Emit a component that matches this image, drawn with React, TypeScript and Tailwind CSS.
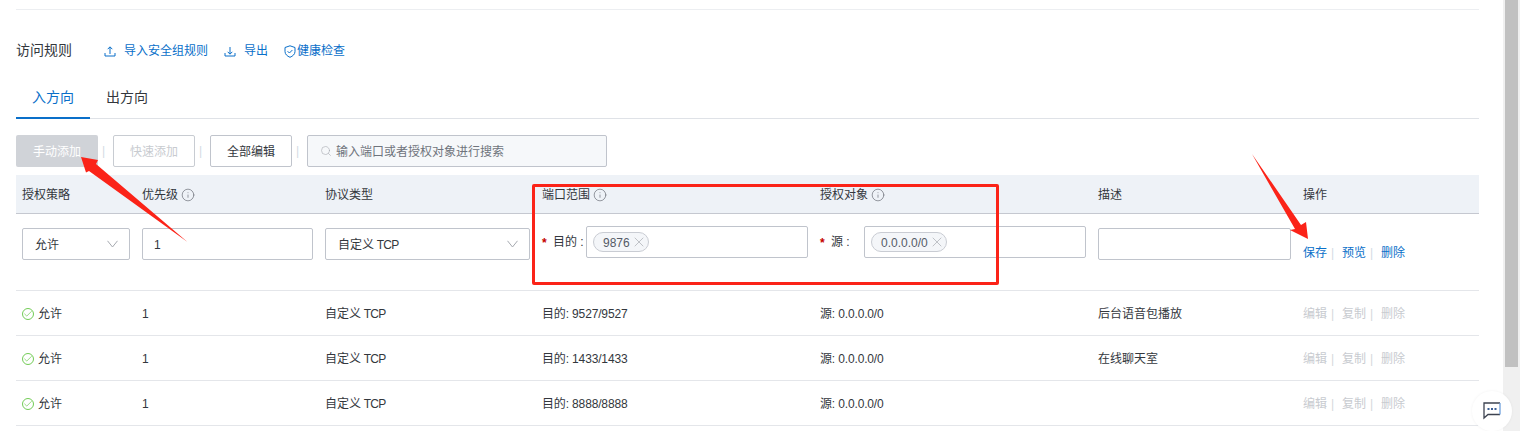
import { Check, Info, Search, X } from "lucide-react";

const GRID = "grid grid-cols-[126px_183px_217px_278px_278px_205px_176px]";

function Tray({ up }: { up: boolean }) {
  return (
    <svg width="12" height="12" viewBox="0 0 12 12" fill="none" stroke="#0a6fc9" strokeWidth="1">
      <path d="M1 8v3h10V8" />
      <path d="M6 9V2" />
      {up ? <path d="M3.7 4.2 6 1.8l2.3 2.4" /> : <path d="M3.7 6.8 6 9.2l2.3-2.4" />}
    </svg>
  );
}

function Shield() {
  return (
    <svg width="12" height="13" viewBox="0 0 12 13" fill="none" stroke="#0a6fc9" strokeWidth="1">
      <path d="M6 .8 11 2.5v4c0 2.8-2.2 4.6-5 5.8-2.8-1.2-5-3-5-5.8v-4z" />
      <path d="m3.6 6.2 1.8 1.8 3-3" />
    </svg>
  );
}

function Chevron() {
  return (
    <svg width="11" height="8" viewBox="0 0 11 8" fill="none" stroke="#a6aab0" strokeWidth="1">
      <path d="M.5 .8 5.5 7l5-6.2" />
    </svg>
  );
}

function Tcp() {
  return (
    <>
      自定义<span className="tracking-[-0.7px]"> TCP</span>
    </>
  );
}

function HeadCell({ label, info, first }: { label: string; info?: boolean; first?: boolean }) {
  return (
    <div className={`flex items-center gap-[3px] pt-[2px] ${first ? "pl-[6px]" : ""}`}>
      <span>{label}</span>
      {info && <Info size={14} strokeWidth={1.2} className="text-[#6b7078]" />}
    </div>
  );
}

function Tag({ text }: { text: string }) {
  return (
    <span className="flex items-center h-[20px] rounded-full border border-[#c9ccd3] bg-[#f4f6f9] pl-[9px] pr-[1px] text-[#555b66] gap-[1px]">
      <span className="pt-[1px]">{text}</span>
      <X size={16} strokeWidth={1} className="text-[#a4a8ae]" />
    </span>
  );
}

function Select({ children, w }: { children: React.ReactNode; w: string }) {
  return (
    <div className={`${w} h-[32px] flex items-center justify-between rounded-[2px] border border-[#c0c4cc] pl-[12px] pr-[11px]`}>
      <span className="pt-[1px]">{children}</span>
      <Chevron />
    </div>
  );
}

function Ops({ items, color, sepColor }: { items: string[]; color: string; sepColor: string }) {
  return (
    <div className={`flex items-center ${color}`}>
      {items.map((t, i) => (
        <span key={i} className="flex items-center">
          <span className="w-[24px]">{t}</span>
          {i < items.length - 1 && <span className={`w-[15px] pl-[4px] ${sepColor}`}>|</span>}
        </span>
      ))}
    </div>
  );
}

function Sep() {
  return <span className="w-[15px] pl-[4px] text-[#d3dbe3]">|</span>;
}

function Row({ port, desc }: { port: string; desc: string }) {
  return (
    <div className={`${GRID} h-[45px] items-center border-b border-[#e4e6ea] pt-[2px]`}>
      <div className="flex items-center gap-[4px] pl-[6px]">
        <span className="flex items-center justify-center w-[12px] h-[12px] rounded-full border border-[#72cc55]">
          <Check size={10} strokeWidth={1.8} className="text-[#72cc55]" />
        </span>
        <span>允许</span>
      </div>
      <div>1</div>
      <div><Tcp /></div>
      <div className="tracking-[-0.15px]">目的: {port}</div>
      <div className="tracking-[-0.15px]">源: 0.0.0.0/0</div>
      <div>{desc}</div>
      <Ops items={["编辑", "复制", "删除"]} color="text-[#c8cbd0]" sepColor="text-[#d5d8dc]" />
    </div>
  );
}

export default function App() {
  return (
    <div className="relative flex w-[1520px] h-[431px] overflow-hidden bg-white text-[12px] leading-[16px] text-[#33373d] font-['Liberation_Sans','Noto_Sans_CJK_SC',sans-serif]">
      <main className="w-[1503px] shrink-0 pl-[16px] pr-[24px] pt-[9px]">
        <div className="border-t border-[#eceef1]" />

        <div className="flex items-center h-[20px] mt-[31px]">
          <span className="w-[88px] text-[14px] pb-[2px]">访问规则</span>
          <a className="flex items-center gap-[8px] text-[#0a6fc9]"><Tray up />导入安全组规则</a>
          <a className="flex items-center gap-[8px] text-[#0a6fc9] ml-[16px]"><Tray up={false} />导出</a>
          <a className="flex items-center gap-[1px] text-[#0a6fc9] ml-[16px]"><Shield />健康检查</a>
        </div>

        <div className="flex h-[43px] mt-[15px] items-stretch border-b border-[#dfe2e7] text-[14px]">
          <div className="w-[74px] flex items-center justify-center border-b-2 border-[#0a6fc9] -mb-[1px] text-[#0a6fc9]">入方向</div>
          <div className="w-[74px] flex items-center justify-center">出方向</div>
        </div>

        <div className="flex items-center h-[32px] mt-[16px]">
          <button className="w-[82px] h-[32px] pt-[1px] rounded-[2px] bg-[#d0d3d8] text-white">手动添加</button>
          <Sep />
          <button className="w-[82px] h-[32px] pt-[1px] rounded-[2px] border border-[#c8ccd2] text-[#c8cbd0]">快速添加</button>
          <Sep />
          <button className="w-[82px] h-[32px] pt-[1px] rounded-[2px] border border-[#c0c4cc]">全部编辑</button>
          <Sep />
          <div className="w-[300px] h-[32px] flex items-center gap-[4px] rounded-[2px] border border-[#c0c4cc] bg-[#f6f8fa] pl-[12px] text-[#6f747c]">
            <Search size={12} strokeWidth={1.2} className="text-[#a6aab0]" />
            <span className="pt-[1px]">输入端口或者授权对象进行搜索</span>
          </div>
        </div>

        <div className={`${GRID} h-[39px] mt-[8px] items-center bg-[#eef2f7] border-b border-[#c5c8d0]`}>
          <HeadCell label="授权策略" first />
          <HeadCell label="优先级" info />
          <HeadCell label="协议类型" />
          <HeadCell label="端口范围" info />
          <HeadCell label="授权对象" info />
          <HeadCell label="描述" />
          <HeadCell label="操作" />
        </div>

        <div className={`${GRID} h-[77px] border-b border-[#e4e6ea]`}>
          <div className="pl-[6px] pt-[14px]"><Select w="w-[108px]">允许</Select></div>
          <div className="pt-[14px]">
            <div className="w-[171px] h-[32px] flex items-center rounded-[2px] border border-[#c0c4cc] pl-[11px] pt-[1px]">1</div>
          </div>
          <div className="pt-[14px]"><Select w="w-[205px]"><Tcp /></Select></div>
          <div className="pt-[12px]">
            <div className="flex items-center">
              <span className="w-[11px] pt-[2px] font-bold text-[#c40000]">*</span>
              <span className="w-[33px]">目的 :</span>
              <div className="w-[222px] h-[32px] flex items-center rounded-[2px] border border-[#c0c4cc] pl-[6px]"><Tag text="9876" /></div>
            </div>
          </div>
          <div className="pt-[12px]">
            <div className="flex items-center">
              <span className="w-[11px] pt-[2px] font-bold text-[#c40000]">*</span>
              <span className="w-[33px]">源 :</span>
              <div className="w-[222px] h-[32px] flex items-center rounded-[2px] border border-[#c0c4cc] pl-[6px]"><Tag text="0.0.0.0/0" /></div>
            </div>
          </div>
          <div className="pt-[14px]">
            <div className="w-[193px] h-[32px] rounded-[2px] border border-[#c0c4cc]" />
          </div>
          <div className="pt-[31px]">
            <Ops items={["保存", "预览", "删除"]} color="text-[#0a6fc9]" sepColor="text-[#d3dbe3]" />
          </div>
        </div>

        <Row port="9527/9527" desc="后台语音包播放" />
        <Row port="1433/1433" desc="在线聊天室" />
        <Row port="8888/8888" desc="" />
      </main>

      <div className="w-[17px] h-full bg-[#f0f0f0] px-[2px]">
        <div className="h-[367px] bg-[#c1c1c1]" />
      </div>

      {/* annotations over the page */}
      <div className="absolute left-[532px] top-[184px] w-[467px] h-[101px] rounded-[2px] border-[3px] border-[#fb2318]" />
      <svg className="absolute left-0 top-0 pointer-events-none" width="1520" height="431" viewBox="0 0 1520 431">
        <polygon fill="#fb2318" points="81,157 98,160 96,164 187.5,242 89,171 86,172.5" />
        <polygon fill="#fb2318" points="1252,154 1301,225 1306,222 1308,239 1290,230 1295,229" />
      </svg>

      <div className="absolute left-[1472px] top-[391px] w-[40px] h-[40px] rounded-full bg-white shadow-[0_0_3px_rgba(0,0,0,0.06)] flex items-center justify-center">
        <svg width="18" height="18" viewBox="0 0 18 18" fill="none">
          <path d="M17 1H1v15l4-3.5h12" stroke="#3d4350" strokeWidth="1.3" />
          <path d="M17 1v11.5" stroke="#6f9fdc" strokeWidth="1.3" />
          <rect x="4.5" y="6" width="2" height="2" fill="#3b5f96" />
          <rect x="8" y="6" width="2" height="2" fill="#3b5f96" />
          <rect x="11.5" y="6" width="2" height="2" fill="#3b5f96" />
        </svg>
      </div>
    </div>
  );
}
